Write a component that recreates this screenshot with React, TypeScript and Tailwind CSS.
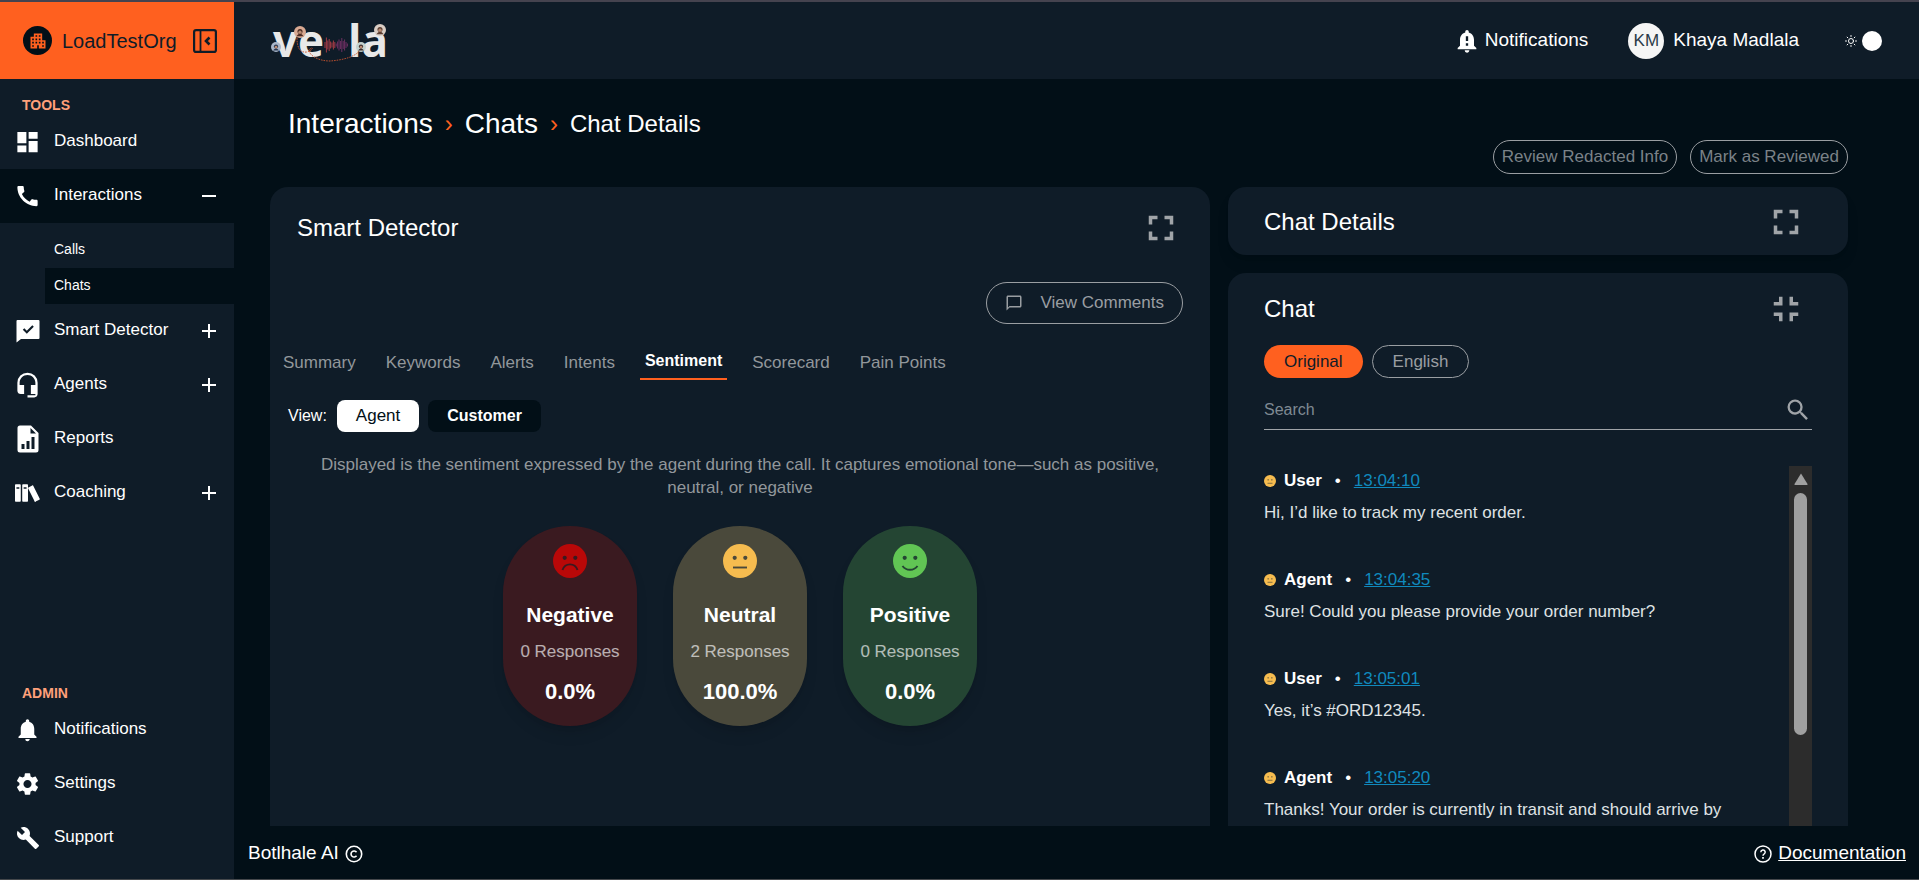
import { useState, type ReactNode } from "react";
import {
  MdApartment,
  MdBuild,
  MdCall,
  MdDashboard,
  MdFullscreen,
  MdFullscreenExit,
  MdHeadsetMic,
  MdNotificationImportant,
  MdNotifications,
  MdOutlineChatBubbleOutline,
  MdSearch,
  MdSettings,
} from "react-icons/md";
import { ImBooks } from "react-icons/im";

type Mood = "negative" | "neutral" | "positive";

function CollapseIcon() {
  return (
    <svg viewBox="0 0 24 24" className="size-6" fill="none" stroke="currentColor" strokeWidth="2.2">
      <rect x="1.1" y="1.1" width="21.800" height="21.800" rx="2" />
      <path d="M7.5 1v22" strokeWidth="1.800" />
      <path d="M16.5 8.5 13 12l3.5 3.5" strokeWidth="2.6" />
    </svg>
  );
}

function CheckChatIcon() {
  return (
    <svg viewBox="0 0 24 24" className="size-6" fill="currentColor">
      <path
        fillRule="evenodd"
        d="M1.500 1h21a1 1 0 0 1 1 1v17a1 1 0 0 1-1 1H5L.5 23.500V2a1 1 0 0 1 1-1zM8.300 9.200 6.800 10.700l4 4 7-7-1.500-1.500-5.500 5.500z"
      />
    </svg>
  );
}

function ReportIcon() {
  return (
    <svg viewBox="0 0 22 28" className="h-7 w-[22px]" fill="currentColor">
      <path
        fillRule="evenodd"
        d="M3 .5h11L21.500 8v17a2.500 2.500 0 0 1-2.500 2.500H3A2.500 2.500 0 0 1 .5 25V3A2.500 2.500 0 0 1 3 .5zM13.500 3v5.500H19zM4.500 19v5h3v-5zM9.500 16v8h3v-8zM14.500 12v12h3V12z"
      />
    </svg>
  );
}

function SunIcon() {
  return (
    <svg viewBox="0 0 24 24" className="size-3" fill="none" stroke="currentColor" strokeWidth="2" strokeLinecap="round">
      <circle cx="12" cy="12" r="5" />
      <path d="M12 1v2M12 21v2M1 12h2M21 12h2M4.200 4.200l1.500 1.500M18.300 18.300l1.500 1.500M4.200 19.800l1.500-1.500M18.300 5.700l1.500-1.500" />
    </svg>
  );
}

function CopyrightIcon() {
  return (
    <svg viewBox="0 0 18 18" className="size-[18px]" fill="none" stroke="currentColor" strokeWidth="1.600">
      <circle cx="9" cy="9" r="7.700" />
      <path d="M11.500 7.300A3 3 0 1 0 11.500 10.700" />
    </svg>
  );
}

function HelpIcon() {
  return (
    <svg viewBox="0 0 18 18" className="size-[18px]" fill="none" stroke="currentColor" strokeWidth="1.500">
      <circle cx="9" cy="9" r="8" />
      <path d="M6.800 7.200a2.200 2.200 0 1 1 3.200 2c-.8.400-1 .8-1 1.600" />
      <path d="M9 12v1.700" strokeWidth="1.700" />
    </svg>
  );
}

const faceColor: Record<Mood, string> = {
  negative: "fill-[#b90808]",
  neutral: "fill-[#f6bc4f]",
  positive: "fill-[#61c554]",
};
const faceInk: Record<Mood, string> = {
  negative: "text-[#3a1a20]",
  neutral: "text-[#4a493b]",
  positive: "text-[#244533]",
};
const mouth: Record<Mood, string> = {
  negative: "M9.500 26c2.600-7.500 12.400-7.500 15 0",
  neutral: "M10 23.500h14",
  positive: "M9.500 22c3.500 5 11.500 5 15 0",
};

function Face({ mood, className }: { mood: Mood; className: string }) {
  return (
    <svg viewBox="0 0 34 34" className={`${className} ${faceInk[mood]}`} role="img" aria-label={mood}>
      <circle cx="17" cy="17" r="17" className={faceColor[mood]} />
      <circle cx="11.700" cy="13.800" r="2.100" fill="currentColor" />
      <circle cx="22.300" cy="13.800" r="2.100" fill="currentColor" />
      <path d={mouth[mood]} fill="none" stroke="currentColor" strokeWidth="1.900" />
    </svg>
  );
}

const wave = [6, 15, 9, 12, 7, 5, 9, 6, 3, 7, 11, 8, 14, 8, 11, 6, 3];

function Portrait({ x, y, r, skin, hair }: { x: number; y: number; r: number; skin: string; hair: string }) {
  return (
    <g>
      <circle cx={x} cy={y} r={r} fill={skin} />
      <circle cx={x} cy={y - r * 0.1} r={r * 0.42} fill={hair} />
      <circle cx={x} cy={y + r * 0.05} r={r * 0.28} fill="#b98a72" />
      <path d={`M${x - r * 0.6} ${y + r * 0.7}q${r * 0.6} ${-r * 0.8} ${r * 1.2} 0z`} fill={hair} />
    </g>
  );
}

function Logo() {
  return (
    <svg viewBox="0 -12 124 66" className="h-[66px] w-[124px]" role="img" aria-label="vela">
      <g className="fill-[#e8e8e8] font-['Open_Sans',sans-serif] text-[44px] font-bold">
        <text x="2" y="37">ve</text>
        <text x="77" y="37">la</text>
      </g>
      {wave.map((h, i) => (
        <path
          key={i}
          d={`M${54 + i * 1.4} ${25 - h / 2}v${h}`}
          stroke={i < 8 ? "#a33b45" : "#6d2f62"}
          strokeWidth="1"
        />
      ))}
      <path
        d="M26 18c0 10 3 15 10 14 7-2 6-6 3-3-3 5 7 12 20 12 13-1 26-4 31-12"
        fill="none"
        stroke="#c9532f"
        strokeWidth="0.900"
        strokeDasharray="1.600 1"
      />
      <Portrait x={29} y={12} r={6} skin="#d8a992" hair="#4a2a22" />
      <Portrait x={5} y={27} r={5} skin="#a9b6c9" hair="#26364f" />
      <Portrait x={109} y={10} r={6} skin="#d9cdc4" hair="#5a3d30" />
      <Portrait x={90} y={27} r={5} skin="#c4d2cf" hair="#3a2c2c" />
    </svg>
  );
}

function NavItem({
  icon,
  label,
  mark,
  active,
}: {
  icon: ReactNode;
  label: string;
  mark?: "plus" | "minus";
  active?: boolean;
}) {
  return (
    <a
      href="#"
      className={`flex h-[54px] items-center pr-[18px] pl-[14px] ${active ? "bg-[#020f17]" : ""}`}
    >
      <span className="flex w-[27px] justify-center">{icon}</span>
      <span className="ml-[13px] flex-1 pb-0.5 text-[17px]">{label}</span>
      {mark && (
        <svg viewBox="0 0 14 14" className="size-[14px]" stroke="currentColor" strokeWidth="2">
          <path d={mark === "plus" ? "M0 7h14M7 0v14" : "M0 7h14"} />
        </svg>
      )}
    </a>
  );
}

function Sidebar() {
  return (
    <aside className="flex w-[234px] shrink-0 flex-col bg-[#0f1c28]">
      <div className="flex h-[77px] shrink-0 items-center bg-[#ff601f] pr-[17px] pl-[23px] text-[#0f1c28]">
        <span className="flex size-[29px] items-center justify-center rounded-full bg-[#020f17] text-[#ff601f]">
          <MdApartment className="size-5" />
        </span>
        <span className="ml-[10px] flex-1 text-xl">LoadTestOrg</span>
        <button type="button" aria-label="Collapse sidebar">
          <CollapseIcon />
        </button>
      </div>
      <nav className="flex flex-1 flex-col pb-3.5">
        <h2 className="mt-4 h-5 pl-[22px] text-sm leading-5 font-bold text-[#ffa07a]">TOOLS</h2>
        <NavItem icon={<MdDashboard className="size-7" />} label="Dashboard" />
        <NavItem icon={<MdCall className="size-7" />} label="Interactions" mark="minus" active />
        <div className="flex flex-col pt-[9px] pl-[45px] text-sm">
          <a href="#" className="flex h-9 items-center pb-0.5 pl-[9px]">Calls</a>
          <a href="#" className="flex h-9 items-center bg-[#020f17] pb-0.5 pl-[9px]">Chats</a>
        </div>
        <NavItem icon={<CheckChatIcon />} label="Smart Detector" mark="plus" />
        <NavItem icon={<MdHeadsetMic className="size-7" />} label="Agents" mark="plus" />
        <NavItem icon={<ReportIcon />} label="Reports" />
        <NavItem icon={<ImBooks className="size-[26px]" />} label="Coaching" mark="plus" />
        <h2 className="mt-auto h-5 pl-[22px] text-sm leading-5 font-bold text-[#ffa07a]">ADMIN</h2>
        <NavItem icon={<MdNotifications className="size-7" />} label="Notifications" />
        <NavItem icon={<MdSettings className="size-7" />} label="Settings" />
        <NavItem icon={<MdBuild className="size-6" />} label="Support" />
      </nav>
    </aside>
  );
}

function Header() {
  return (
    <header className="flex h-[77px] shrink-0 items-center bg-[#0f1c28] pr-[37px] pl-[37px] text-[19px]">
      <Logo />
      <a href="#" className="ml-auto flex items-center gap-1">
        <MdNotificationImportant className="size-7" />
        Notifications
      </a>
      <button type="button" className="ml-10 flex items-center gap-[9px]">
        <span className="flex size-9 items-center justify-center rounded-full bg-[#f5f5f5] text-[17px] text-[#2b3a48]">
          KM
        </span>
        Khaya Madlala
      </button>
      <button type="button" aria-label="Toggle theme" className="ml-[46px] flex items-center gap-[5px]">
        <SunIcon />
        <span className="size-5 rounded-full bg-white" />
      </button>
    </header>
  );
}

const tabs = ["Summary", "Keywords", "Alerts", "Intents", "Sentiment", "Scorecard", "Pain Points"];

const results: { mood: Mood; title: string; count: number; share: string; bg: string }[] = [
  { mood: "negative", title: "Negative", count: 0, share: "0.0%", bg: "bg-[#3a1a20]" },
  { mood: "neutral", title: "Neutral", count: 2, share: "100.0%", bg: "bg-[#4a493b]" },
  { mood: "positive", title: "Positive", count: 0, share: "0.0%", bg: "bg-[#244533]" },
];

function SmartDetector() {
  const [tab, setTab] = useState("Sentiment");
  return (
    <section className="rounded-t-[18px] bg-[#0f1c28]">
      <div className="flex h-20 items-center justify-between pt-0.5 pr-7 pl-[27px]">
        <h2 className="text-2xl">Smart Detector</h2>
        <button type="button" aria-label="Expand Smart Detector" className="text-[#a0a4a8]">
          <MdFullscreen className="size-[42px]" />
        </button>
      </div>
      <div className="flex justify-end pt-[15px] pr-[27px]">
        <button
          type="button"
          className="flex h-[42px] items-center rounded-full border border-[#9a9ea2] px-[18px] text-[17px] text-[#9a9ea2]"
        >
          <MdOutlineChatBubbleOutline className="mr-[18px] size-[18px]" />
          View Comments
        </button>
      </div>
      <div role="tablist" className="mt-5 flex h-9 gap-5 pl-2">
        {tabs.map((name) => (
          <button
            key={name}
            type="button"
            role="tab"
            aria-selected={tab === name}
            onClick={() => setTab(name)}
            className={
              tab === name
                ? "border-b-2 border-[#ff601f] px-[5px] text-base font-bold"
                : "px-[5px] pt-0.5 text-[17px] text-[#92979b]"
            }
          >
            {name}
          </button>
        ))}
      </div>
      <div className="mt-5 flex items-center pl-[18px]">
        <span className="mr-[10px] text-base">View:</span>
        <button type="button" className="mr-[9px] h-8 rounded-lg bg-white px-[19px] text-[17px] text-[#020f17]">
          Agent
        </button>
        <button type="button" className="h-8 rounded-lg bg-[#020f17] px-[19px] text-base font-bold">
          Customer
        </button>
      </div>
      <p className="mx-auto mt-[21px] max-w-[860px] text-center text-[17px] leading-[23px] text-[#92979b]">
        Displayed is the sentiment expressed by the agent during the call. It captures emotional tone—such as positive,
        neutral, or negative
      </p>
      <div className="mt-[27px] flex justify-center gap-9">
        {results.map((r) => (
          <article
            key={r.mood}
            className={`flex h-[200px] w-[134px] flex-col items-center rounded-full pt-[18px] shadow-lg ${r.bg}`}
          >
            <Face mood={r.mood} className="size-[34px]" />
            <h3 className="mt-6 text-[21px] leading-[26px] font-bold">{r.title}</h3>
            <p className="mt-3 text-[17px] leading-6 text-white/65">{r.count} Responses</p>
            <p className="mt-[14px] text-[22px] leading-7 font-bold">{r.share}</p>
          </article>
        ))}
      </div>
    </section>
  );
}

const messages = [
  { who: "User", time: "13:04:10", text: "Hi, I’d like to track my recent order." },
  { who: "Agent", time: "13:04:35", text: "Sure! Could you please provide your order number?" },
  { who: "User", time: "13:05:01", text: "Yes, it’s #ORD12345." },
  {
    who: "Agent",
    time: "13:05:20",
    text: "Thanks! Your order is currently in transit and should arrive by [delivery date].",
  },
];

function Chat() {
  return (
    <section className="rounded-t-[18px] bg-[#0f1c28] px-9">
      <div className="flex h-[72px] items-center justify-between pr-[5px]">
        <h2 className="text-2xl">Chat</h2>
        <button type="button" aria-label="Collapse chat" className="text-[#a0a4a8]">
          <MdFullscreenExit className="size-[42px]" />
        </button>
      </div>
      <div className="flex gap-[9px] text-[17px]">
        <button type="button" className="h-[33px] rounded-full bg-[#ff601f] px-5 text-[#0f1c28]">
          Original
        </button>
        <button
          type="button"
          className="h-[33px] rounded-full border border-[#9a9ea2] px-5 text-[#9a9ea2]"
        >
          English
        </button>
      </div>
      <div className="mt-3 flex h-10 items-center border-b border-[#a0a4a8]">
        <input
          type="search"
          aria-label="Search"
          placeholder="Search"
          className="min-w-0 flex-1 bg-transparent text-base outline-none placeholder:text-[#7f8a93]"
        />
        <button type="button" aria-label="Run search" className="text-[#a0a4a8]">
          <MdSearch className="size-7" />
        </button>
      </div>
      <div className="mt-9 flex h-[540px]">
        <ul className="min-w-0 flex-1 pr-6">
          {messages.map((m) => (
            <li key={m.time} className="h-[99px]">
              <div className="flex h-[30px] items-center text-[17px]">
                <Face mood="neutral" className="mr-2 size-3" />
                <span className="font-bold">{m.who}</span>
                <span className="mx-[13px]">•</span>
                <a href="#" className="text-[#1089bd] underline">
                  {m.time}
                </a>
              </div>
              <p className="mt-[5px] text-[17px] leading-[23px] text-[#dfe2e4]">{m.text}</p>
            </li>
          ))}
        </ul>
        <div className="flex w-[23px] flex-col items-center bg-[#2c2c2c] pt-[7px]">
          <svg viewBox="0 0 14 12" className="h-3 w-[14px]" fill="#a0a0a0">
            <path d="M7 .5 13.500 11a.7.7 0 0 1-.6 1H1.100a.7.7 0 0 1-.6-1z" />
          </svg>
          <div className="mt-2 h-[242px] w-[13px] rounded-full bg-[#a0a0a0]" />
        </div>
      </div>
    </section>
  );
}

export default function App() {
  return (
    <div className="flex h-screen flex-col border-t-2 border-b border-t-[#45434f] border-b-[#45484c] bg-[#020f17] font-['Liberation_Sans',Arial,sans-serif] text-white">
      <div className="flex min-h-0 flex-1">
        <Sidebar />
        <div className="flex min-w-0 flex-1 flex-col">
          <Header />
          <main className="min-h-0 flex-1 overflow-hidden pr-[71px] pl-9">
            <nav aria-label="Breadcrumb" className="flex h-[61px] items-end pl-[18px] text-[28px] leading-8">
              <ol className="flex items-center">
                <li><a href="#">Interactions</a></li>
                <li aria-hidden="true" className="mx-3 text-2xl leading-8 text-[#ff601f]">›</li>
                <li><a href="#">Chats</a></li>
                <li aria-hidden="true" className="mx-3 text-2xl leading-8 text-[#ff601f]">›</li>
                <li className="text-2xl leading-8">Chat Details</li>
              </ol>
            </nav>
            <div className="mb-[13px] flex justify-end gap-[13px] text-[17px] text-[#7b8288]">
              <button type="button" className="h-[34px] rounded-full border border-[#9a9ea2] px-2">
                Review Redacted Info
              </button>
              <button type="button" className="h-[34px] rounded-full border border-[#9a9ea2] px-2">
                Mark as Reviewed
              </button>
            </div>
            <div className="grid grid-cols-[940fr_620fr] gap-[18px]">
              <SmartDetector />
              <div className="flex min-w-0 flex-col gap-[18px]">
                <section className="flex h-[68px] items-center justify-between rounded-[18px] bg-[#0f1c28] pt-0.5 pr-[41px] pl-9 shadow-lg">
                  <h2 className="text-2xl">Chat Details</h2>
                  <button type="button" aria-label="Expand chat details" className="text-[#a0a4a8]">
                    <MdFullscreen className="size-[42px]" />
                  </button>
                </section>
                <Chat />
              </div>
            </div>
          </main>
          <footer className="flex h-[53px] shrink-0 items-center justify-between pt-0.5 pr-[13px] pl-[14px] text-[19px]">
            <span className="flex items-center gap-1.5">
              Botlhale AI <CopyrightIcon />
            </span>
            <a href="#" className="flex items-center gap-1.5">
              <HelpIcon />
              <span className="underline">Documentation</span>
            </a>
          </footer>
        </div>
      </div>
    </div>
  );
}
